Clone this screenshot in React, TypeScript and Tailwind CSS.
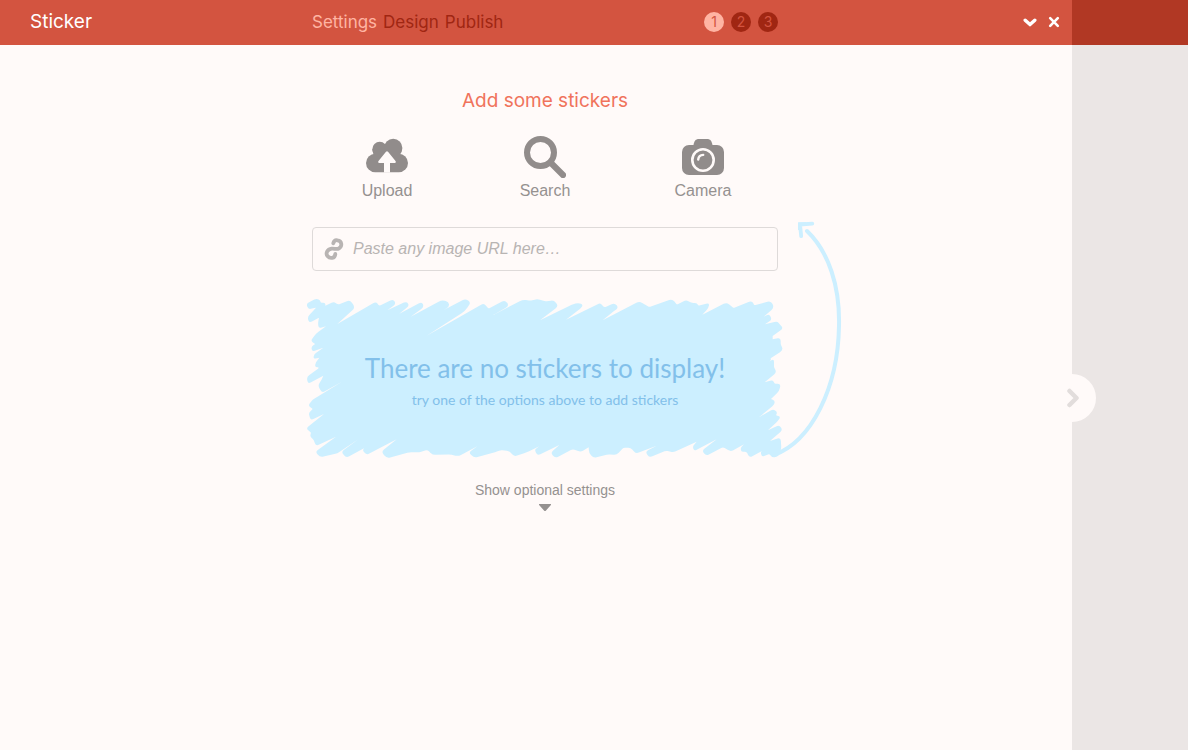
import { useState } from "react";

const steps = [
  { number: 1, name: "Settings" },
  { number: 2, name: "Design" },
  { number: 3, name: "Publish" },
];

function UploadIcon() {
  return (
    <svg viewBox="0 0 42 42" className="size-[42px]" aria-hidden="true">
      <g fill="currentColor">
        <circle cx="13.700" cy="13.200" r="7.400" />
        <circle cx="27.200" cy="12" r="9.200" />
        <rect x="0" y="17.800" width="42" height="18.400" rx="9.200" />
        <path d="M6.300 13.500h29.500L34 18.500v6H7.500v-6z" />
      </g>
      <path
        fill="#fffaf9"
        d="M18 36.500V27h-4.700c-1.200 0-1.500-1-.8-1.900l7.500-9.400c.6-.7 1.400-.7 2 0l7.500 9.400c.7.900.4 1.900-.8 1.900H24v9.500z"
      />
    </svg>
  );
}

function SearchIcon() {
  return (
    <svg viewBox="0 0 42 42" className="size-[42px]" aria-hidden="true" fill="none" stroke="currentColor">
      <circle cx="16.500" cy="16.500" r="13.500" strokeWidth="6" />
      <path d="M27 27l12 12" strokeWidth="6.200" strokeLinecap="round" />
    </svg>
  );
}

function CameraIcon() {
  return (
    <svg viewBox="0 0 42 42" className="size-[42px]" aria-hidden="true">
      <path
        fill="currentColor"
        d="M7 9h4.500c.8-4 2-6 5.500-6h8c3.500 0 4.700 2 5.500 6H35a7 7 0 0 1 7 7v16a7 7 0 0 1-7 7H7a7 7 0 0 1-7-7V16a7 7 0 0 1 7-7z"
      />
      <circle cx="21" cy="24" r="10.700" fill="none" stroke="#fffaf9" strokeWidth="2.600" />
      <path d="M16.200 23.500a5.200 5.200 0 0 1 5-4.600" fill="none" stroke="#fffaf9" strokeWidth="2.400" strokeLinecap="round" />
    </svg>
  );
}

const sources = [
  { label: "Upload", Icon: UploadIcon },
  { label: "Search", Icon: SearchIcon },
  { label: "Camera", Icon: CameraIcon },
];

type Corner = [x: number, y: number, radius: number];

// Outline of the marker scribble, clockwise. A radius of 0 is a sharp notch between two strokes.
const outline: Corner[] = [
  // top edge
  [18, 57, 9], [50, 40, 8], [61, 47, 6], [62, 53, 4], [76, 53, 6], [76, 62, 0], [102, 50, 8], [114, 59, 6],
  [150, 45, 10], [166, 68, 12], [112, 117, 0],
  [228, 50, 10], [238, 63, 6], [280, 42, 10], [288, 57, 9], [262, 76, 0],
  [320, 49, 9], [328, 62, 9], [298, 86, 0], [366, 50, 10], [372, 66, 10], [332, 95, 0],
  [425, 45, 9], [446, 50, 9], [448, 65, 8], [430, 76, 0], [496, 41, 10], [513, 52, 10], [495, 78, 12], [380, 152, 0],
  [552, 54, 10], [565, 71, 5], [615, 45, 10], [628, 62, 12], [580, 90, 0],
  [668, 44, 10], [692, 47, 5], [712, 42, 8], [735, 49, 5], [762, 46, 9], [776, 63, 12], [720, 106, 0],
  [815, 59, 10], [836, 53, 10], [850, 60, 9], [840, 72, 8], [798, 104, 0],
  [902, 53, 10], [911, 68, 8], [944, 54, 10], [956, 68, 10], [940, 80, 8], [908, 106, 0],
  [1018, 49, 10], [1048, 66, 5], [1117, 42, 10], [1131, 59, 4], [1158, 45, 8], [1176, 54, 5], [1190, 54, 8], [1195, 62, 3],
  [1228, 54, 10], [1226, 68, 9], [1207, 89, 0],
  [1280, 52, 10], [1301, 69, 4], [1356, 47, 9], [1363, 61, 4], [1413, 47, 11], [1423, 68, 12], [1391, 95, 0],
  // right edge
  [1408, 87, 9], [1416, 104, 9], [1395, 118, 0], [1432, 109, 9], [1439, 118, 4], [1450, 130, 10], [1418, 153, 0], [1418, 163, 0],
  [1442, 158, 9], [1442, 178, 4], [1450, 195, 12], [1412, 220, 0], [1413, 226, 5], [1394, 237, 0],
  [1422, 221, 9], [1422, 246, 3], [1430, 262, 10], [1394, 292, 0],
  [1418, 285, 8], [1424, 296, 3], [1442, 296, 9], [1438, 318, 10], [1413, 342, 0],
  [1424, 346, 8], [1424, 358, 9], [1378, 396, 0], [1420, 372, 9], [1432, 382, 7], [1428, 391, 2], [1442, 395, 8], [1434, 408, 8],
  [1404, 436, 0], [1438, 420, 9], [1448, 435, 9], [1410, 468, 0], [1442, 457, 10], [1444, 490, 7], [1436, 513, 8],
  // bottom edge
  [1418, 519, 9], [1408, 507, 4], [1385, 516, 8], [1382, 500, 6], [1390, 496, 0], [1348, 518, 10], [1340, 500, 5],
  [1323, 500, 6], [1322, 488, 5], [1332, 478, 0],
  [1292, 500, 9], [1269, 486, 6], [1218, 513, 10], [1206, 497, 9], [1250, 463, 0],
  [1182, 498, 9], [1178, 485, 6], [1190, 470, 0], [1120, 502, 8], [1098, 497, 5], [1048, 518, 10], [1036, 500, 9], [1070, 482, 0],
  [1008, 506, 9], [992, 488, 7], [970, 488, 5], [950, 510, 9], [925, 508, 5], [880, 519, 10], [867, 503, 8], [866, 487, 0],
  [842, 501, 8], [818, 492, 6], [765, 520, 11], [752, 503, 9], [778, 480, 0],
  [712, 512, 10], [704, 494, 6], [718, 484, 0], [680, 502, 8], [642, 515, 10], [628, 498, 8], [602, 495, 5], [585, 502, 6],
  [522, 519, 11], [506, 502, 9], [532, 484, 0], [475, 514, 9], [450, 508, 5], [398, 510, 10], [382, 494, 7], [358, 502, 6],
  [328, 502, 6], [260, 520, 11], [244, 500, 10], [290, 463, 0], [200, 510, 9], [188, 497, 7], [192, 490, 0],
  [138, 519, 11], [124, 500, 9], [175, 463, 0], [112, 505, 6], [60, 517, 11], [46, 500, 9], [108, 455, 0],
  // left edge
  [48, 483, 9], [40, 463, 4], [30, 455, 7], [33, 443, 2], [18, 430, 9], [72, 387, 0],
  [32, 406, 9], [26, 385, 6], [38, 372, 2], [24, 362, 9], [38, 344, 4], [126, 290, 0],
  [66, 324, 10], [54, 302, 8], [66, 282, 2], [70, 272, 0], [24, 297, 9], [20, 276, 9], [58, 248, 5], [44, 245, 7], [48, 232, 2],
  [58, 218, 0], [40, 222, 7], [42, 208, 7], [70, 188, 0], [36, 200, 9], [34, 184, 7], [46, 177, 2], [32, 168, 8], [48, 146, 8],
  [78, 124, 0], [56, 130, 7], [54, 114, 6], [57, 98, 2], [28, 114, 9], [22, 97, 9], [48, 68, 2], [26, 73, 7],
];

function toward(from: Corner, to: Corner) {
  const length = Math.hypot(to[0] - from[0], to[1] - from[1]) || 1;
  const t = Math.min(from[2], length / 2) / length;
  return `${(from[0] + (to[0] - from[0]) * t).toFixed(1)} ${(from[1] + (to[1] - from[1]) * t).toFixed(1)}`;
}

function roundedPath(corners: Corner[]) {
  const parts = corners.map((corner, i) => {
    const previous = corners[(i + corners.length - 1) % corners.length];
    const next = corners[(i + 1) % corners.length];
    return `${i ? "L" : "M"}${toward(corner, previous)}Q${corner[0]} ${corner[1]} ${toward(corner, next)}`;
  });
  return `${parts.join("")}Z`;
}

const scribblePath = roundedPath(outline);

function Scribble() {
  return (
    <svg
      viewBox="306 218 540 244"
      className="pointer-events-none absolute bottom-0 -left-1.5 h-[244px] w-[540px]"
      fill="none"
      stroke="#ccefff"
      strokeLinecap="round"
      strokeLinejoin="round"
      aria-hidden="true"
    >
      <path transform="translate(300 285) scale(.33333)" fill="#ccefff" stroke="none" d={scribblePath} />
      <path strokeWidth="4" d="M774 455C812 441 838 387 839 326C840 287 829 252 807 231" />
      <path strokeWidth="3.800" d="M801.200 236.200L800 224.500L812.300 223.700" />
      <path strokeWidth="3" strokeLinejoin="miter" strokeLinecap="butt" d="M799.500 230V223.800H806" />
    </svg>
  );
}

export default function App() {
  const [active, setActive] = useState(1);

  return (
    <div className="flex min-h-screen bg-[#fffaf9] font-['Liberation_Sans',sans-serif] text-[#959190]">
      <div className="flex min-w-0 flex-1 flex-col">
        <header className="relative flex h-[45px] items-center bg-[#d35440] pb-px font-['Inter',sans-serif]">
          <h1 className="absolute left-[30px] text-[19px] leading-6 text-white">Sticker</h1>
          <div className="flex flex-1 justify-center pl-[18px]">
            <nav className="flex w-full max-w-[466px] items-center justify-between" aria-label="Steps">
              <div className="flex gap-1.5 text-[17px] leading-6">
                {steps.map((step) => (
                  <button
                    key={step.number}
                    type="button"
                    onClick={() => setActive(step.number)}
                    className={active === step.number ? "text-[#ffb4a3]" : "text-[#a02612]"}
                  >
                    {step.name}
                  </button>
                ))}
              </div>
              <div className="flex gap-[7px]">
                {steps.map((step) => (
                  <button
                    key={step.number}
                    type="button"
                    aria-label={`Step ${step.number}`}
                    onClick={() => setActive(step.number)}
                    className={
                      active === step.number
                        ? "flex size-5 items-center justify-center rounded-full bg-[#ffb4a3] text-sm text-[#d35440]"
                        : "flex size-5 items-center justify-center rounded-full bg-[#a02612] text-sm text-[#d35440]"
                    }
                  >
                    {step.number}
                  </button>
                ))}
              </div>
            </nav>
          </div>
          <div className="absolute right-3 flex gap-[11px] text-white">
            <button type="button" aria-label="Collapse">
              <svg viewBox="0 0 14 12" className="h-3 w-3.5" fill="none" stroke="currentColor" strokeWidth="3.400" strokeLinecap="round" strokeLinejoin="round">
                <path d="M2.200 4.200L7 8.600l4.800-4.400" />
              </svg>
            </button>
            <button type="button" aria-label="Close">
              <svg viewBox="0 0 12 12" className="size-3" fill="none" stroke="currentColor" strokeWidth="2.600" strokeLinecap="round">
                <path d="M2.200 2.200l7.600 7.600M9.800 2.200l-7.600 7.600" />
              </svg>
            </button>
          </div>
        </header>

        <main className="flex flex-1 justify-center pl-[18px]">
          <div className="flex w-full max-w-[466px] flex-col pt-11">
            <h2 className="text-center font-['Inter',sans-serif] text-[19px] leading-6 text-[#f0735c]">Add some stickers</h2>

            <div className="mt-[23px] grid grid-cols-3 gap-2">
              {sources.map(({ label, Icon }) => (
                <button key={label} type="button" className="flex flex-col items-center gap-px text-base leading-6">
                  <span className="text-[#918c8b]">
                    <Icon />
                  </span>
                  {label}
                </button>
              ))}
            </div>

            <div className="mt-6 flex h-11 items-center gap-2 rounded border border-[#dedad9] px-2.5">
              <svg viewBox="0 0 22 24" className="h-6 w-[22px] shrink-0" fill="none" stroke="#b8b4b3" strokeWidth="3.800" strokeLinecap="round" aria-hidden="true">
                <path d="M10.300 6.300C11 3.500 13 3 14.500 3.300C19 4 19.500 9 16 11.300C13.500 12.900 11.500 11.200 8.700 11.600C4 12.200 2.500 16.500 4.500 19C7 22 12 21.500 12.300 17" />
              </svg>
              <input
                type="url"
                aria-label="Image URL"
                placeholder="Paste any image URL here…"
                className="min-w-0 flex-1 bg-transparent text-base italic outline-none placeholder:text-[#b8b4b3]"
              />
            </div>

            <section className="relative mt-[27px] h-[164px] pt-[52px] text-center font-['Lato',sans-serif] text-[#82c0ea]">
              <Scribble />
              <p className="relative text-[26px] leading-9">There are no stickers to display!</p>
              <p className="relative mt-0.5 text-sm leading-6">try one of the options above to add stickers</p>
            </section>

            <button type="button" className="mt-[18px] flex flex-col items-center gap-1 self-center text-sm leading-5">
              Show optional settings
              <svg viewBox="0 0 12 8" className="h-2 w-3" fill="currentColor" aria-hidden="true">
                <path d="M.5 0h11a.5.5 0 0 1 .4.900L7 6.500q-1 1-2 0L.1.900A.5.5 0 0 1 .5 0z" />
              </svg>
            </button>
          </div>
        </main>
      </div>

      <aside className="flex w-[116px] shrink-0 flex-col bg-[#ebe6e5]">
        <div className="h-[45px] bg-[#b13824]" />
        <div className="relative flex-1">
          <button
            type="button"
            aria-label="Show preview"
            className="absolute top-1/2 -left-6 flex size-12 -translate-y-1/2 items-center justify-center rounded-full bg-[#fffaf9] pl-0.5 text-[#e2dddc]"
          >
            <svg viewBox="0 0 12 20" className="h-5 w-3" fill="none" stroke="currentColor" strokeWidth="4.500" strokeLinecap="round" strokeLinejoin="round" aria-hidden="true">
              <path d="M2.500 3L9.500 10l-7 7" />
            </svg>
          </button>
        </div>
      </aside>
    </div>
  );
}
